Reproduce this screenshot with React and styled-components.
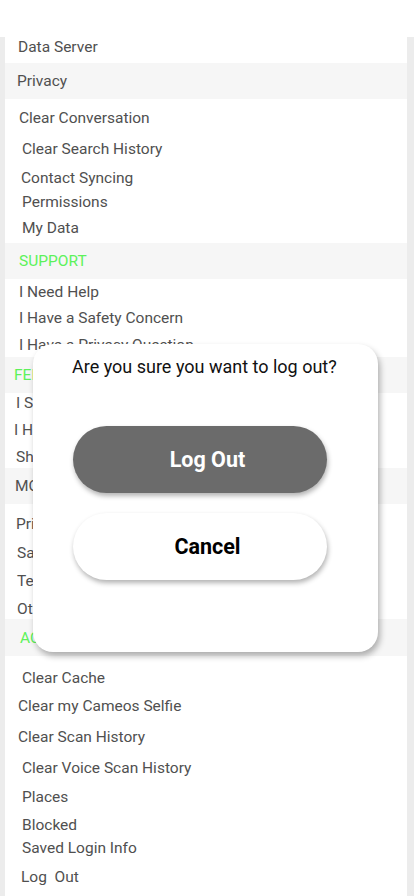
import React from "react";
import styled, { createGlobalStyle } from "styled-components";

const GlobalStyle = createGlobalStyle`
  html, body {
    margin: 0;
    padding: 0;
    background: #fff;
    overflow: hidden;
    font-family: Roboto, "Liberation Sans", sans-serif;
  }
`;

const Screen = styled.div`
  position: relative;
  width: 414px;
  height: 896px;
  overflow: hidden;
  background: #fff;
`;

const Panel = styled.div`
  margin-top: 37px;
  min-height: 900px;
  background: #fff;
  border-left: 5px solid #ececec;
  border-right: 7px solid #ececec;
  display: flex;
  flex-direction: column;
`;

const Item = styled.div`
  height: 20px;
  line-height: 20px;
  margin-top: ${(p) => p.mt || 0}px;
  padding-left: ${(p) => (p.x || 18) - 5}px;
  font-size: 15.5px;
  color: #505050;
  white-space: pre;
`;

const Header = styled.div`
  height: ${(p) => p.h || 36}px;
  margin-top: ${(p) => p.mt || 0}px;
  display: flex;
  align-items: center;
  padding-left: ${(p) => (p.x || 18) - 5}px;
  background: #f6f6f6;
  font-size: 15.5px;
  color: ${(p) => (p.green ? "#5df25a" : "#505050")};
  white-space: nowrap;
`;

const Dialog = styled.div`
  position: absolute;
  top: 344px;
  left: 33px;
  width: 345px;
  height: 308px;
  box-sizing: border-box;
  padding-top: 13px;
  background: #fff;
  border-radius: 20px;
  box-shadow: 2px 4px 6px rgba(0, 0, 0, 0.3);
  display: flex;
  flex-direction: column;
`;

const Question = styled.div`
  height: 20px;
  line-height: 20px;
  padding-left: 39px;
  font-size: 18px;
  color: #111;
  white-space: nowrap;
`;

const Button = styled.button`
  margin: ${(p) => p.mt}px 0 0 40px;
  width: 254px;
  height: 67px;
  border: none;
  border-radius: 34px;
  padding: 0 0 0 15px;
  font-family: Roboto, "Liberation Sans", sans-serif;
  font-size: 21.5px;
  font-weight: 700;
  background: ${(p) => (p.primary ? "#6b6b6b" : "#fff")};
  color: ${(p) => (p.primary ? "#fff" : "#000")};
  box-shadow: 1px 3px 5px rgba(0, 0, 0, 0.3);
`;

const rows = [
  { type: "item", text: "Data Server", x: 18, mt: 0 },
  { type: "header", text: "Privacy", x: 17, mt: 6 },
  { type: "item", text: "Clear Conversation", x: 19, mt: 9 },
  { type: "item", text: "Clear Search History", x: 22, mt: 11 },
  { type: "item", text: "Contact Syncing", x: 21, mt: 9 },
  { type: "item", text: "Permissions", x: 22, mt: 4 },
  { type: "item", text: "My Data", x: 22, mt: 6 },
  { type: "header", text: "SUPPORT", x: 19, mt: 5, green: true },
  { type: "item", text: "I Need Help", x: 19, mt: 3 },
  { type: "item", text: "I Have a Safety Concern", x: 19, mt: 6 },
  { type: "item", text: "I Have a Privacy Question", x: 19, mt: 7 },
  { type: "header", text: "FEEDBACK", x: 14, mt: 2, green: true },
  { type: "item", text: "I Spotted a Bug", x: 16, mt: 0 },
  { type: "item", text: "I Have a Suggestion", x: 14, mt: 7 },
  { type: "item", text: "Shake to Report", x: 16, mt: 7 },
  { type: "header", text: "MORE INFORMATION", x: 15, mt: 1 },
  { type: "item", text: "Privacy Policy", x: 16, mt: 10 },
  { type: "item", text: "Safety Center", x: 17, mt: 9 },
  { type: "item", text: "Terms of Service", x: 17, mt: 8 },
  { type: "item", text: "Other Legal", x: 17, mt: 8 },
  { type: "header", text: "ACCOUNT ACTIONS", x: 20, mt: 0, h: 37, green: true },
  { type: "item", text: "Clear Cache", x: 22, mt: 12 },
  { type: "item", text: "Clear my Cameos Selfie", x: 18, mt: 8 },
  { type: "item", text: "Clear Scan History", x: 18, mt: 11 },
  { type: "item", text: "Clear Voice Scan History", x: 22, mt: 11 },
  { type: "item", text: "Places", x: 22, mt: 9 },
  { type: "item", text: "Blocked", x: 22, mt: 8 },
  { type: "item", text: "Saved Login Info", x: 22, mt: 3 },
  { type: "item", text: "Log  Out", x: 21, mt: 9 },
];

export default function App() {
  return (
    <Screen>
      <GlobalStyle />
      <Panel>
        {rows.map((r, i) =>
          r.type === "header" ? (
            <Header key={i} x={r.x} mt={r.mt} h={r.h} green={r.green}>
              {r.text}
            </Header>
          ) : (
            <Item key={i} x={r.x} mt={r.mt}>
              {r.text}
            </Item>
          )
        )}
      </Panel>
      <Dialog>
        <Question>Are you sure you want to log out?</Question>
        <Button primary mt={49}>Log Out</Button>
        <Button mt={20}>Cancel</Button>
      </Dialog>
    </Screen>
  );
}
